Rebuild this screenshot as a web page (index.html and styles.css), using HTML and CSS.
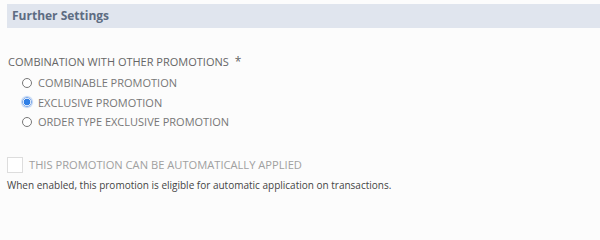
FILE: index.html
```html
<!DOCTYPE html>
<html>
<head>
<meta charset="utf-8">
<link rel="stylesheet" href="styles.css">
</head>
<body>
<div class="section-head">Further Settings</div>
<div class="field">
  <div class="field-label">COMBINATION WITH OTHER PROMOTIONS <span class="req">*</span></div>
  <div class="options">
    <div class="option"><span class="radio"></span><span class="opt-text">COMBINABLE PROMOTION</span></div>
    <div class="option"><span class="radio checked"></span><span class="opt-text">EXCLUSIVE PROMOTION</span></div>
    <div class="option"><span class="radio"></span><span class="opt-text">ORDER TYPE EXCLUSIVE PROMOTION</span></div>
  </div>
</div>
<div class="check-field">
  <div class="check-row"><span class="checkbox"></span><span class="check-text">THIS PROMOTION CAN BE AUTOMATICALLY APPLIED</span></div>
  <div class="help">When enabled, this promotion is eligible for automatic application on transactions.</div>
</div>
</body>
</html>
```
FILE: styles.css
```css
html, body {
  margin: 0;
  padding: 0;
  background: #fcfcfc;
  font-family: "Open Sans", "Liberation Sans", sans-serif;
}
.section-head {
  margin: 4px 0 0 7px;
  height: 24px;
  line-height: 24px;
  padding-left: 5px;
  background: #e0e5ee;
  color: #5d6c82;
  font-weight: 700;
  font-size: 12px;
}
.field {
  margin-top: 27px;
  padding-left: 8px;
}
.field-label {
  font-size: 11px;
  color: #666;
  line-height: 14px;
}
.req {
  color: #666;
  margin-left: 3px;
  font-size: 12px;
}
.options {
  padding-left: 14px;
  margin-top: 4px;
}
.option {
  display: flex;
  align-items: center;
  height: 19.5px;
}
.radio {
  width: 8px;
  height: 8px;
  border: 1px solid #777;
  border-radius: 50%;
  background: #fff;
  margin-right: 6px;
  flex: none;
  box-sizing: content-box;
}
.radio.checked {
  border-color: #7aa6e8;
  background: radial-gradient(circle, #2f7fe6 0 3.2px, #fff 3.6px);
  box-shadow: 0 0 1px 1px #b9d2f4;
}
.opt-text {
  font-size: 11px;
  color: #777;
}
.check-field {
  margin-top: 25px;
  padding-left: 7px;
}
.check-row {
  display: flex;
  align-items: center;
  height: 16px;
}
.checkbox {
  width: 14px;
  height: 14px;
  border: 1px solid #ddd;
  background: #fff;
  margin-right: 6px;
  flex: none;
}
.check-text {
  font-size: 11.15px;
  color: #a0a0a0;
}
.help {
  font-size: 10px;
  color: #444;
  margin-top: 5px;
}
```
